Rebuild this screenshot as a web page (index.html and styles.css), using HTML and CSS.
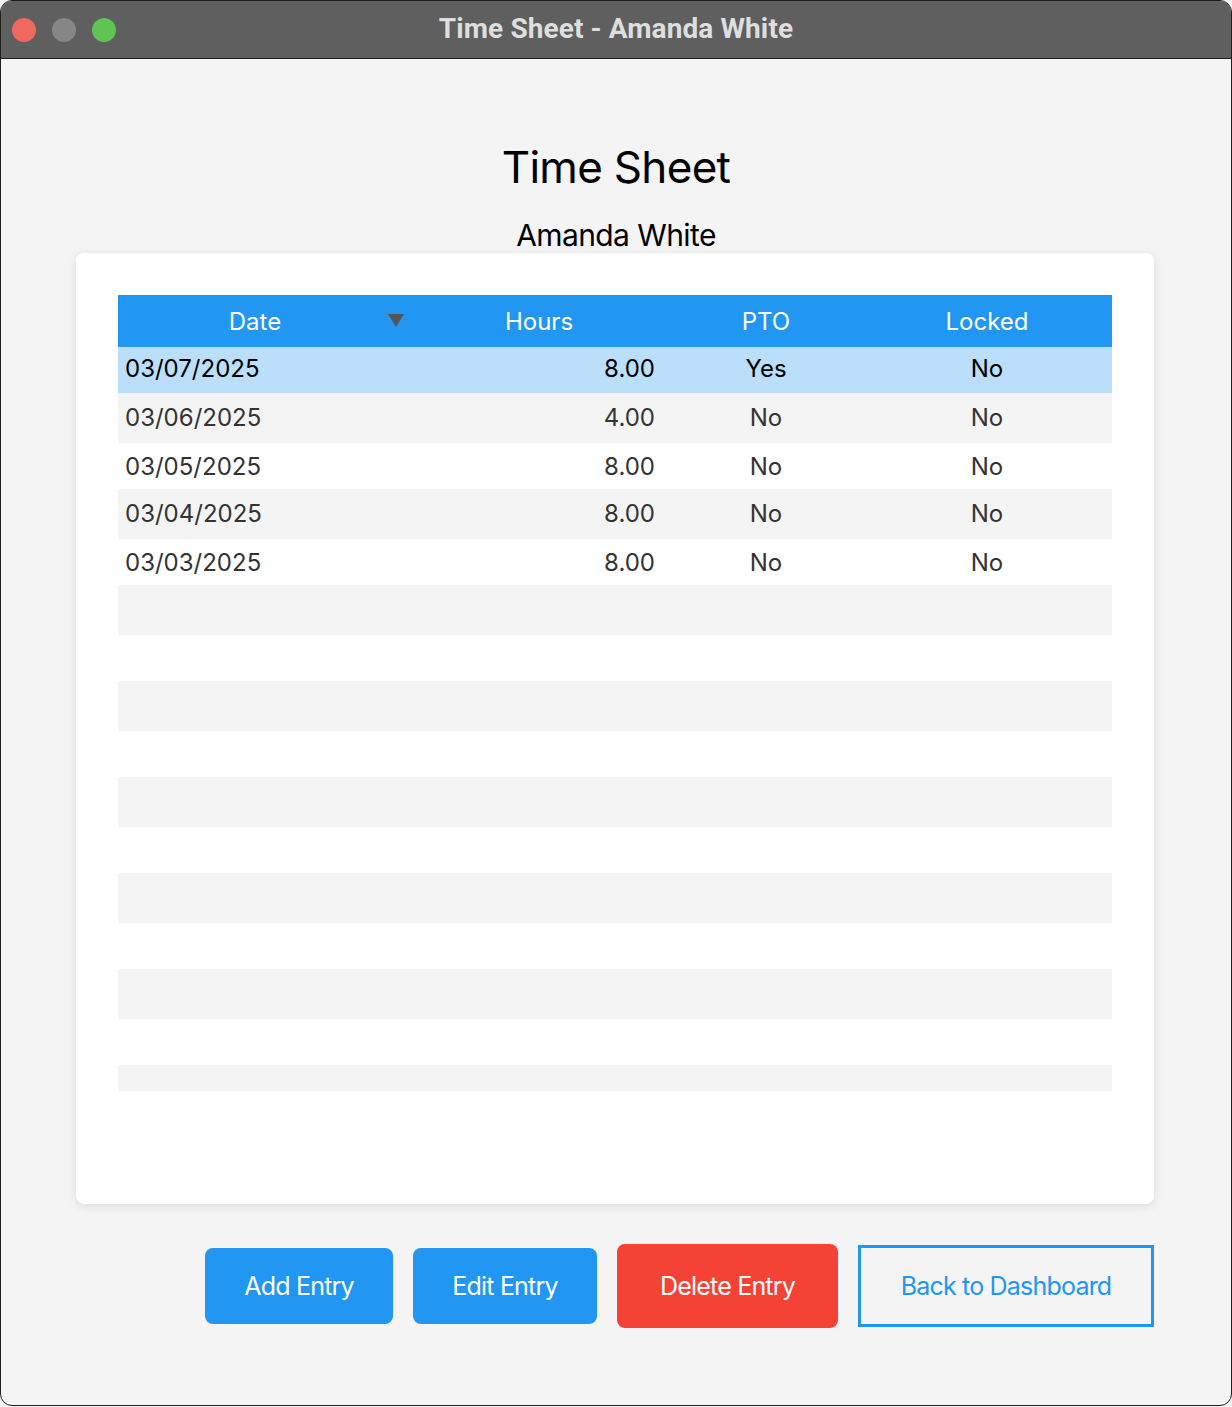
FILE: index.html
```html
<!DOCTYPE html>
<html lang="en">
<head>
<meta charset="utf-8">
<title>Time Sheet - Amanda White</title>
<link rel="stylesheet" href="styles.css">
</head>
<body>
<div class="window">
  <div class="titlebar">
    <div class="lights">
      <span class="light red"></span>
      <span class="light gray"></span>
      <span class="light green"></span>
    </div>
    <div class="wintitle">Time Sheet - Amanda White</div>
  </div>
  <div class="content">
    <h1 class="title">Time Sheet</h1>
    <div class="subtitle">Amanda White</div>
    <div class="card">
      <div class="table">
        <div class="row head">
          <div class="cell c-date"><span class="hlabel">Date</span><span class="arrow"></span></div>
          <div class="cell c-center">Hours</div>
          <div class="cell c-center">PTO</div>
          <div class="cell c-center">Locked</div>
        </div>
        <div class="row selected">
          <div class="cell c-left">03/07/2025</div>
          <div class="cell c-right">8.00</div>
          <div class="cell c-center">Yes</div>
          <div class="cell c-center">No</div>
        </div>
        <div class="row odd">
          <div class="cell c-left">03/06/2025</div>
          <div class="cell c-right">4.00</div>
          <div class="cell c-center">No</div>
          <div class="cell c-center">No</div>
        </div>
        <div class="row even">
          <div class="cell c-left">03/05/2025</div>
          <div class="cell c-right">8.00</div>
          <div class="cell c-center">No</div>
          <div class="cell c-center">No</div>
        </div>
        <div class="row odd">
          <div class="cell c-left">03/04/2025</div>
          <div class="cell c-right">8.00</div>
          <div class="cell c-center">No</div>
          <div class="cell c-center">No</div>
        </div>
        <div class="row even">
          <div class="cell c-left">03/03/2025</div>
          <div class="cell c-right">8.00</div>
          <div class="cell c-center">No</div>
          <div class="cell c-center">No</div>
        </div>
        <div class="row odd empty"></div>
        <div class="row even empty"></div>
        <div class="row odd empty"></div>
        <div class="row even empty"></div>
        <div class="row odd empty"></div>
        <div class="row even empty"></div>
        <div class="row odd empty"></div>
        <div class="row even empty"></div>
        <div class="row odd empty"></div>
        <div class="row even empty"></div>
        <div class="row odd empty"></div>
      </div>
    </div>
    <div class="actions">
      <button class="btn btn-add">Add Entry</button>
      <button class="btn btn-edit">Edit Entry</button>
      <button class="btn btn-delete">Delete Entry</button>
      <button class="btn btn-back">Back to Dashboard</button>
    </div>
  </div>
</div>
</body>
</html>
```

FILE: styles.css
```css
* { box-sizing: border-box; }
html, body { margin: 0; padding: 0; }
body {
  background: #f4f4f4;
  font-family: Inter, "Noto Sans", sans-serif;
  width: 1232px;
  height: 1407px;
  overflow: hidden;
}
.window {
  width: 1232px;
  height: 1406px;
  border: 1px solid #1e1e1e;
  border-radius: 12px;
  overflow: hidden;
  background: #f4f4f4;
  display: flex;
  flex-direction: column;
}
.titlebar {
  height: 58px;
  background: #5f5f5f;
  border-bottom: 1px solid #1e1e1e;
  display: flex;
  align-items: center;
  justify-content: center;
  position: relative;
  flex-shrink: 0;
}
.lights {
  position: absolute;
  left: 11px;
  top: 17px;
  display: flex;
  gap: 16px;
}
.light {
  width: 24px;
  height: 24px;
  border-radius: 50%;
  display: block;
}
.light.red { background: #ee6a5f; }
.light.gray { background: #868686; }
.light.green { background: #5fc454; }
.wintitle {
  color: #dedede;
  font-family: Roboto, Inter, sans-serif;
  font-weight: 700;
  font-size: 28px;
  letter-spacing: 0.1px;
  margin-top: -2px;
}
.content {
  flex: 1;
  display: flex;
  flex-direction: column;
  align-items: center;
  padding: 80px 75px 0;
}
.title {
  margin: 0;
  font-size: 44px;
  line-height: 56px;
  font-weight: 400;
  color: #000;
  letter-spacing: -0.7px;
}
.subtitle {
  margin-top: 22px;
  font-size: 30px;
  line-height: 36px;
  color: #000;
  letter-spacing: -0.6px;
}
.card {
  align-self: flex-start;
  width: 1078px;
  height: 951px;
  background: #fff;
  border-radius: 8px;
  box-shadow: 0 2px 10px rgba(0, 0, 0, 0.10);
  padding: 42px 42px 0;
}
.table {
  height: 796px;
  overflow: hidden;
}
.row {
  display: grid;
  grid-template-columns: 290px 262px 192px 250px;
  align-items: center;
  font-size: 24px;
  color: #333;
}
.row.head {
  height: 52px;
  background: #2196f3;
  color: #fff;
}
.row.selected { background: #bbdefb; color: #000; height: 46px; padding-bottom: 3px; }
.row.odd { background: #f4f4f4; height: 50px; padding-bottom: 2px; }
.row.even { background: #fff; height: 46px; }
.cell { white-space: nowrap; }
.c-left { padding-left: 7px; }
.c-right { text-align: right; padding-right: 15px; }
.c-center { text-align: center; }
.c-date {
  display: flex;
  align-items: center;
  padding-left: 14px;
}
.hlabel { flex: 1; text-align: center; }
.arrow {
  width: 0;
  height: 0;
  border-left: 8px solid transparent;
  border-right: 8px solid transparent;
  border-top: 13px solid #555;
  margin-right: 4px;
  margin-left: 10px;
  margin-top: -2px;
}
.actions {
  align-self: flex-start;
  width: 1078px;
  margin-top: 40px;
  display: flex;
  justify-content: flex-end;
  align-items: center;
  gap: 20px;
}
.btn {
  font-family: Inter, "Noto Sans", sans-serif;
  font-size: 25px;
  letter-spacing: -0.8px;
  border: none;
  color: #fff;
  padding: 0;
  cursor: pointer;
}
.btn-add { width: 188px; height: 76px; background: #2196f3; border-radius: 8px; }
.btn-edit { width: 184px; height: 76px; background: #2196f3; border-radius: 8px; }
.btn-delete { width: 221px; height: 84px; background: #f44336; border-radius: 8px; }
.btn-back {
  width: 296px;
  height: 82px;
  background: transparent;
  border: 3px solid #2196f3;
  color: #2196f3;
  border-radius: 0;
}
```
